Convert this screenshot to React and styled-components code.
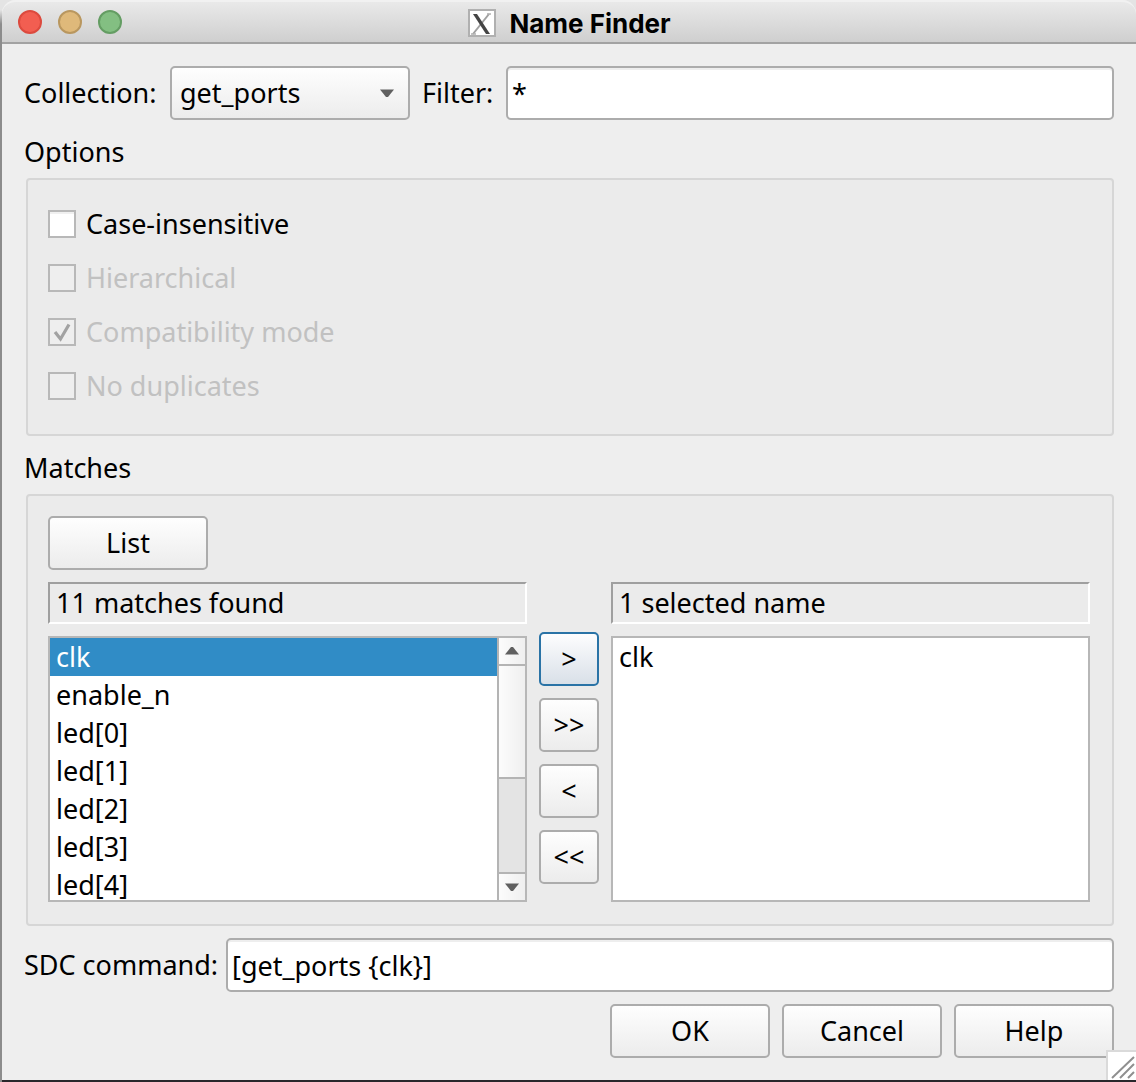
import React, { useState } from "react";
import styled, { createGlobalStyle, css } from "styled-components";

const GlobalStyle = createGlobalStyle`
  *, *::before, *::after { box-sizing: border-box; }
  body {
    margin: 0;
    background: #8c8c8c;
    color: #000;
    font-family: "Noto Sans", "Open Sans", sans-serif;
    font-size: 27px;
    line-height: 38px;
  }
  button, input, select { font: inherit; color: inherit; margin: 0; }
`;

const Desktop = styled.div`
  min-height: 100vh;
  display: flex;
  padding-left: 2px;
  background: linear-gradient(#e4e4e4 0, #e4e4e4 10px, #8c8c8c 24px);
`;

const Window = styled.main`
  position: relative;
  flex: 1;
  min-width: 0;
  display: flex;
  flex-direction: column;
  background: #eeeeee;
  border-bottom: 2px solid #29272b;
  border-radius: 14px 14px 0 0;
`;

const TitleBar = styled.header`
  position: relative;
  height: 44px;
  display: flex;
  align-items: center;
  justify-content: center;
  gap: 12px;
  padding-top: 4px;
  border-top: 2px solid #f1f1f1;
  border-bottom: 2px solid #a2a2a2;
  border-radius: 14px 14px 0 0;
  background: linear-gradient(#e9e9e9, #cfcfcf);
`;

const Lights = styled.div`
  position: absolute;
  left: 16px;
  top: 8px;
  display: flex;
  gap: 16px;
`;

const Light = styled.button`
  width: 24px;
  height: 24px;
  padding: 0;
  border-radius: 50%;
  border: 2px solid ${(p) => p.$edge};
  background: ${(p) => p.$fill};
`;

const Title = styled.h1`
  margin: 0;
  font: 700 26px/36px Inter, "Liberation Sans", sans-serif;
`;

const Body = styled.form`
  flex: 1;
  display: flex;
  flex-direction: column;
  gap: 12px;
  padding: 22px;
`;

const Row = styled.div`
  display: flex;
  align-items: center;
  gap: 12px;
  justify-content: ${(p) => (p.$end ? "flex-end" : "flex-start")};
`;

const Label = styled.label`
  flex: none;
  width: ${(p) => p.$width}px;
  white-space: nowrap;
`;

const raised = css`
  height: 54px;
  border: 2px solid #acacac;
  border-radius: 5px;
  background: linear-gradient(#fefefe, #ececec);
`;

const SelectBox = styled.div`
  position: relative;
  flex: none;
  width: 240px;

  svg {
    position: absolute;
    right: 16px;
    top: 23px;
    pointer-events: none;
  }
`;

const Select = styled.select`
  ${raised}
  appearance: none;
  display: block;
  width: 100%;
  padding: 0 40px 0 8px;
`;

const TextInput = styled.input`
  flex: 1;
  min-width: 0;
  height: 54px;
  padding: 0 4px;
  border: 2px solid #acacac;
  border-radius: 5px;
  background: #fff;
  box-shadow: inset 0 2px 0 #eeeeee;
  outline: none;
`;

const Section = styled.section`
  display: flex;
  flex-direction: column;
  gap: 6px;
`;

const SectionTitle = styled.h2`
  margin: 0;
  font-size: 27px;
  font-weight: 400;
  line-height: 40px;
`;

const Frame = styled.div`
  margin-left: 2px;
  padding: ${(p) => p.$pad};
  display: flex;
  flex-direction: column;
  gap: ${(p) => p.$gap || 0}px;
  border: 2px solid #d6d6d6;
  border-radius: 4px;
  background: #ebebeb;
`;

const Option = styled.label`
  display: flex;
  align-items: center;
  gap: 10px;
  height: 54px;
  color: ${(p) => (p.$disabled ? "#c1c1c1" : "#000")};
`;

const TickBox = styled.span`
  position: relative;
  width: 28px;
  height: 28px;

  svg {
    position: absolute;
    left: 5px;
    top: 5px;
    pointer-events: none;
  }
`;

const Tick = styled.input`
  appearance: none;
  display: block;
  width: 28px;
  height: 28px;
  margin: 0;
  border: 2px solid #b8b8b8;
  background: #fff;
  box-shadow: inset 0 2px 0 #f0f0f0;

  &:disabled {
    background: #eeeeee;
    box-shadow: none;
  }
`;

const PushButton = styled.button`
  ${raised}
  width: ${(p) => (p.$narrow ? 60 : 160)}px;
  padding: 0;
  ${(p) =>
    p.$active &&
    css`
      border-color: #2a73a6;
      background: linear-gradient(#fdfdfe, #d9e0e8);
    `}
`;

const Columns = styled.div`
  display: flex;
  gap: 12px;
`;

const Column = styled.div`
  flex: 1;
  min-width: 0;
  display: flex;
  flex-direction: column;
  gap: 12px;
`;

const ArrowColumn = styled.div`
  display: flex;
  flex-direction: column;
  gap: 12px;
  padding-top: 50px;
`;

const Status = styled.output`
  display: block;
  padding-left: 6px;
  border: 2px solid;
  border-color: #9f9f9f #fff #fff #9f9f9f;
`;

const ListFrame = styled.div`
  display: flex;
  height: 266px;
  border: 2px solid #b7b7b7;
  background: #fff;
`;

const List = styled.ul`
  flex: 1;
  min-width: 0;
  margin: 0;
  padding: 0;
  list-style: none;
  overflow: hidden;
`;

const Item = styled.li`
  height: 38px;
  padding-left: 6px;
  color: ${(p) => (p.$selected ? "#fff" : "#000")};
  background: ${(p) => (p.$selected ? "#308cc6" : "transparent")};
`;

const ScrollBar = styled.div`
  width: 28px;
  display: flex;
  flex-direction: column;
  border-left: 2px solid #b4b4b4;
  background: #e4e4e4;
`;

const StepButton = styled.button`
  height: 28px;
  padding: 0;
  display: grid;
  place-items: center;
  border: 0 solid #b4b4b4;
  border-width: ${(p) => (p.$down ? "2px 0 0" : "0 0 2px")};
  background: linear-gradient(90deg, #fcfcfc, #efefef);
`;

const Track = styled.div`
  flex: 1;
`;

const Thumb = styled.div`
  height: 55%;
  border-bottom: 2px solid #b4b4b4;
  background: linear-gradient(90deg, #fcfcfc, #efefef);
`;

const Grip = styled.div`
  position: absolute;
  right: 0;
  bottom: 0;
  width: 30px;
  height: 30px;
  border: 2px solid #dadada;
  border-width: 2px 0 0 2px;
  background: #fff;

  svg { display: block; }
`;

const Triangle = ({ up }) => (
  <svg width="14" height="8" viewBox="0 0 14 8" aria-hidden="true">
    <path d={up ? "M0 7.500 6 0h2l6 7.500z" : "M0 .5h14L8 8H6z"} fill="#606060" />
  </svg>
);

const XLogo = () => (
  <svg width="30" height="30" viewBox="0 0 30 30" aria-hidden="true">
    <rect x="2" y="1" width="26" height="26" fill="#fff" stroke="#b0b0b0" strokeWidth="2" />
    <path d="M22 5 6 25" stroke="#a0a0a0" strokeWidth="2" />
    <path d="M6 5h4l13 20h-4z" fill="#444" />
    <path d="M4 25h5M20 5h4" stroke="#b0b0b0" strokeWidth="1.5" />
  </svg>
);

const OPTIONS = [
  { label: "Case-insensitive" },
  { label: "Hierarchical", disabled: true },
  { label: "Compatibility mode", disabled: true, checked: true },
  { label: "No duplicates", disabled: true },
];

const VISIBLE_ROWS = 7;

const MATCHES = [
  "clk", "enable_n", "led[0]", "led[1]", "led[2]", "led[3]",
  "led[4]", "led[5]", "led[6]", "led[7]", "reset_n",
];

const MOVES = [
  { text: ">", name: "Add selected", active: true },
  { text: ">>", name: "Add all" },
  { text: "<", name: "Remove selected" },
  { text: "<<", name: "Remove all" },
];

export default function App() {
  const [current, setCurrent] = useState("clk");
  const [first, setFirst] = useState(0);
  const lastFirst = MATCHES.length - VISIBLE_ROWS;

  return (
    <>
      <GlobalStyle />
      <Desktop>
        <Window>
          <TitleBar>
            <Lights>
              <Light type="button" aria-label="Close" $fill="#f25e51" $edge="#dc4a3e" />
              <Light type="button" aria-label="Minimize" $fill="#dfb97a" $edge="#b9975f" />
              <Light type="button" aria-label="Zoom" $fill="#83bf82" $edge="#649d63" />
            </Lights>
            <XLogo />
            <Title>Name Finder</Title>
          </TitleBar>
          <Body onSubmit={(e) => e.preventDefault()}>
            <Row>
              <Label htmlFor="collection" $width={134}>Collection:</Label>
              <SelectBox>
                <Select id="collection" defaultValue="get_ports">
                  <option>get_ports</option>
                </Select>
                <Triangle />
              </SelectBox>
              <Label htmlFor="filter" $width={72}>Filter:</Label>
              <TextInput id="filter" defaultValue="*" />
            </Row>

            <Section>
              <SectionTitle>Options</SectionTitle>
              <Frame $pad="17px 22px 21px 20px">
                {OPTIONS.map((o) => (
                  <Option key={o.label} $disabled={o.disabled}>
                    <TickBox>
                      <Tick type="checkbox" disabled={o.disabled} defaultChecked={o.checked} />
                      {o.checked && (
                        <svg width="18" height="19" viewBox="0 0 18 19" aria-hidden="true">
                          <path d="M2 9 7.500 16 16 1.500" fill="none" stroke="#a2a2a2" strokeWidth="3.2" />
                        </svg>
                      )}
                    </TickBox>
                    {o.label}
                  </Option>
                ))}
              </Frame>
            </Section>

            <Section>
              <SectionTitle>Matches</SectionTitle>
              <Frame $pad="20px 22px 22px 20px" $gap={12}>
                <PushButton type="button">List</PushButton>
                <Columns>
                  <Column>
                    <Status>11 matches found</Status>
                    <ListFrame>
                      <List role="listbox" aria-label="Matches found">
                        {MATCHES.slice(first, first + VISIBLE_ROWS).map((m) => (
                          <Item
                            key={m}
                            role="option"
                            aria-selected={m === current}
                            $selected={m === current}
                            onClick={() => setCurrent(m)}
                          >
                            {m}
                          </Item>
                        ))}
                      </List>
                      <ScrollBar>
                        <StepButton
                          type="button"
                          aria-label="Scroll up"
                          onClick={() => setFirst(Math.max(0, first - 1))}
                        >
                          <Triangle up />
                        </StepButton>
                        <Track>
                          <Thumb style={{ marginTop: first * 23 }} />
                        </Track>
                        <StepButton
                          type="button"
                          aria-label="Scroll down"
                          $down
                          onClick={() => setFirst(Math.min(lastFirst, first + 1))}
                        >
                          <Triangle />
                        </StepButton>
                      </ScrollBar>
                    </ListFrame>
                  </Column>
                  <ArrowColumn>
                    {MOVES.map((m) => (
                      <PushButton key={m.text} type="button" aria-label={m.name} $narrow $active={m.active}>
                        {m.text}
                      </PushButton>
                    ))}
                  </ArrowColumn>
                  <Column>
                    <Status>1 selected name</Status>
                    <ListFrame>
                      <List role="listbox" aria-label="Selected names">
                        <Item role="option" aria-selected={false}>clk</Item>
                      </List>
                    </ListFrame>
                  </Column>
                </Columns>
              </Frame>
            </Section>

            <Row>
              <Label htmlFor="command" $width={190}>SDC command:</Label>
              <TextInput id="command" defaultValue="[get_ports {clk}]" />
            </Row>

            <Row $end>
              <PushButton type="submit">OK</PushButton>
              <PushButton type="button">Cancel</PushButton>
              <PushButton type="button">Help</PushButton>
            </Row>
          </Body>
          <Grip>
            <svg width="28" height="28" viewBox="0 0 28 28" aria-hidden="true">
              <path d="M4 26 26 5M12 26 26 12M20 26 26 20" stroke="#8f8f8f" strokeWidth="2" />
            </svg>
          </Grip>
        </Window>
      </Desktop>
    </>
  );
}
